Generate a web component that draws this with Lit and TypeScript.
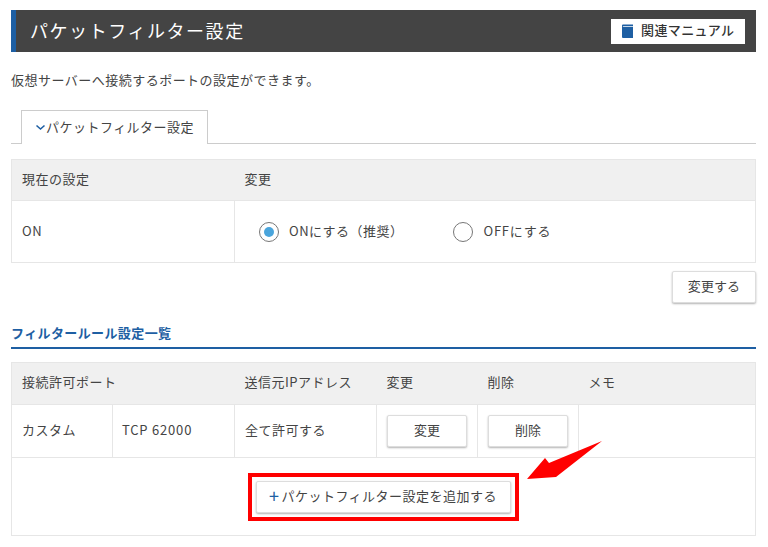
import { LitElement, html, css } from "lit";
import { customElement } from "lit/decorators.js";

@customElement("app-root")
export class AppRoot extends LitElement {
  static styles = css`
    :host {
      display: block;
      position: relative;
      width: 768px;
      height: 547px;
      overflow: hidden;
      box-sizing: border-box;
      padding: 10px 12px 0 11px;
      background: #fff;
      color: #444;
      font-family: "Noto Sans CJK JP", "Noto Sans", sans-serif;
      font-size: 13px;
      letter-spacing: 0.48px;
    }
    * { box-sizing: border-box; }
    .head {
      height: 42px;
      background: #444;
      border-left: 5px solid #1e5fa3;
      display: flex;
      align-items: center;
      justify-content: space-between;
      padding: 0 11px 0 14px;
    }
    .head h1 {
      margin: 0;
      padding-bottom: 2px;
      color: #fff;
      font-size: 18px;
      font-weight: 400;
      letter-spacing: 1.55px;
      line-height: 1;
    }
    .manual {
      width: 134px;
      height: 25px;
      background: #fff;
      display: flex;
      align-items: center;
      gap: 8px;
      padding: 0 0 3px 10px;
      font-size: 13px;
      font-weight: 500;
      letter-spacing: 0.39px;
      color: #333;
    }
    .manual svg { margin-top: 3px; }
    .desc { margin: 18px 0 0; line-height: 19px; }
    .tabs {
      margin-top: 21px;
      height: 34px;
      border-bottom: 1px solid #ccc;
      padding-left: 10px;
      display: flex;
    }
    .tab {
      width: 187px;
      height: 34px;
      border: 1px solid #ccc;
      border-bottom: none;
      background: #fff;
      display: flex;
      align-items: center;
      padding: 0 0 2px 13px;
      gap: 0;
    }
    .tab svg { margin-top: 1px; }
    table {
      width: 745px;
      table-layout: fixed;
      border-collapse: collapse;
      border: 1px solid #e6e6e6;
    }
    th, td {
      border: 1px solid #e6e6e6;
      padding: 0 0 3px 10px;
      text-align: left;
      font-weight: 400;
      height: 41px;
    }
    th { background: #f0f0f0; border-left: none; border-right: none; }
    td.ctl { padding-bottom: 0; }
    .t1 { margin-top: 15px; }
    .t1 .row td { height: 62px; }
    .radios { display: flex; align-items: center; padding-left: 14px; }
    .radio { display: flex; align-items: center; gap: 10px; }
    .radio + .radio { margin-left: 49px; }
    .radio + .radio .lbl { margin-left: 1px; letter-spacing: 0.75px; }
    .radio span.lbl { padding-bottom: 3px; }
    .dot {
      width: 20px;
      height: 20px;
      border: 1px solid #777;
      border-radius: 50%;
      display: flex;
      align-items: center;
      justify-content: center;
    }
    .dot i { width: 10px; height: 10px; border-radius: 50%; background: #4aa5dc; }
    .actions { display: flex; justify-content: flex-end; margin-top: 8px; }
    .btn {
      display: inline-flex;
      align-items: center;
      justify-content: center;
      height: 32px;
      background: #fff;
      border: 1px solid #ddd;
      border-radius: 2px;
      box-shadow: 0 1px 2px rgba(0, 0, 0, 0.3);
      color: #444;
      font: inherit;
      letter-spacing: 0.1px;
      padding: 0 0 3px;
    }
    .change { width: 84px; height: 32px; }
    .sub {
      margin: 21px 0 0;
      height: 25px;
      font-size: 13px;
      font-weight: 700;
      letter-spacing: 0.39px;
      color: #1e5fa3;
      line-height: 18px;
      border-bottom: 2px solid #1e5fa3;
    }
    .t2 { margin-top: 13px; }
    .t2 th { height: 42px; padding-bottom: 5px; }
    .t2 .row td { height: 53px; }
    .t2 .row td.port { letter-spacing: 0.8px; padding-left: 9px; }
    .small { width: 80px; }
    .t2 .add { height: 78px; padding: 0; }
    .add-wrap { display: flex; justify-content: center; padding-right: 1px; }
    .hl { border: 4px solid #f00; padding: 4px; background: #fff; display: flex; }
    .plus-btn { width: 255px; height: 32px; letter-spacing: 0.5px; }
    .plus { color: #1e5fa3; font-size: 18px; line-height: 1; margin-right: 2px; }
    .arrow { position: absolute; left: 520px; top: 435px; }
  `;

  render() {
    return html`
      <div class="head">
        <h1>パケットフィルター設定</h1>
        <div class="manual">
          <svg width="12" height="14" viewBox="0 0 12 14">
            <path d="M1 1.5 L1 13 Q1 14 2 14 L12 14 L12 3 L2.5 3 Q1.7 3 1.7 2.2 L12 2.2 L12 0.5 L2 0.5 Q1 0.5 1 1.5Z" fill="#1e5fa3"/>
          </svg>
          <span>関連マニュアル</span>
        </div>
      </div>
      <p class="desc">仮想サーバーへ接続するポートの設定ができます。</p>
      <div class="tabs">
        <div class="tab">
          <svg width="11" height="7" viewBox="0 0 11 7">
            <path d="M1.5 1.5 L5.5 5 L9.5 1.5" fill="none" stroke="#1e5fa3" stroke-width="1.6"/>
          </svg>
          <span>パケットフィルター設定</span>
        </div>
      </div>

      <table class="t1">
        <colgroup><col style="width:223px" /><col /></colgroup>
        <tr><th>現在の設定</th><th>変更</th></tr>
        <tr class="row">
          <td>ON</td>
          <td class="ctl">
            <div class="radios">
              <label class="radio"><span class="dot"><i></i></span><span class="lbl">ONにする（推奨）</span></label>
              <label class="radio"><span class="dot"></span><span class="lbl">OFFにする</span></label>
            </div>
          </td>
        </tr>
      </table>
      <div class="actions"><button class="btn change">変更する</button></div>

      <h2 class="sub">フィルタールール設定一覧</h2>

      <table class="t2">
        <colgroup>
          <col style="width:101px" /><col style="width:122px" /><col style="width:142px" />
          <col style="width:101px" /><col style="width:101px" /><col />
        </colgroup>
        <tr>
          <th colspan="2">接続許可ポート</th><th>送信元IPアドレス</th><th>変更</th><th>削除</th><th>メモ</th>
        </tr>
        <tr class="row">
          <td>カスタム</td>
          <td class="port">TCP 62000</td>
          <td>全て許可する</td>
          <td class="ctl"><button class="btn small">変更</button></td>
          <td class="ctl"><button class="btn small">削除</button></td>
          <td></td>
        </tr>
        <tr>
          <td class="add" colspan="6">
            <div class="add-wrap">
              <div class="hl">
                <button class="btn plus-btn"><span class="plus">+</span>パケットフィルター設定を追加する</button>
              </div>
            </div>
          </td>
        </tr>
      </table>

      <svg class="arrow" width="90" height="50" viewBox="520 435 90 50">
        <path d="M527 479 L545 458 L549 463 L602 441 L556 477 Z" fill="#f00"/>
      </svg>
    `;
  }
}
